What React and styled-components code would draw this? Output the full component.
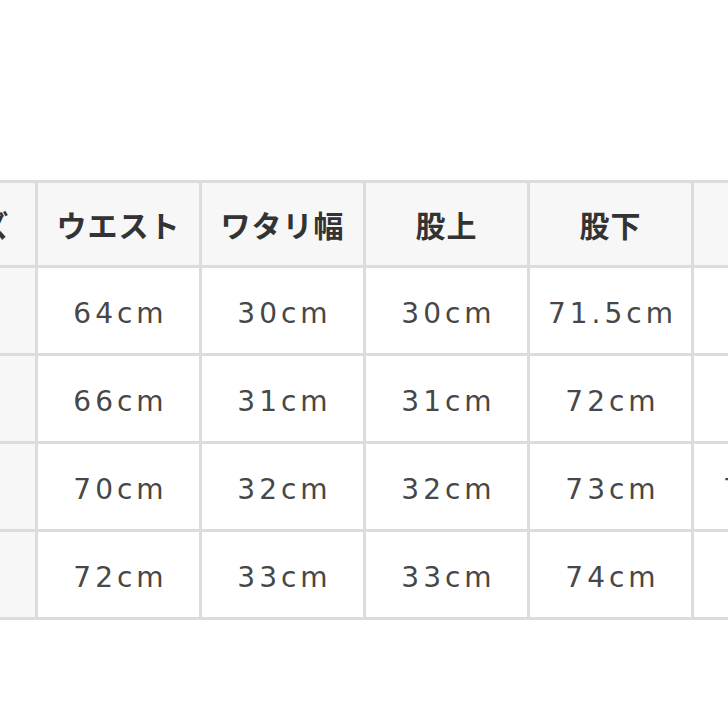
import React from "react";
import styled, { createGlobalStyle } from "styled-components";

const GlobalStyle = createGlobalStyle`
  html, body {
    margin: 0;
    padding: 0;
    background: #ffffff;
    overflow: hidden;
  }
  body {
    width: 728px;
    height: 728px;
  }
`;

const Page = styled.div`
  width: 728px;
  height: 728px;
  overflow: hidden;
  padding-top: 180px;
  box-sizing: border-box;
`;

const SizeTable = styled.table`
  border-collapse: collapse;
  table-layout: fixed;
  width: 987px;
  margin-left: -129px;
`;

const HeadCell = styled.th`
  width: ${(p) => (p.$label ? "143px" : "161px")};
  height: 82px;
  padding: ${(p) => (p.$label ? "0 0 0 18px" : "0")};
  border: 3px solid #dcdcdc;
  background: #f7f7f7;
  color: #333333;
  font-family: "Noto Sans CJK JP", "Noto Sans", sans-serif;
  font-weight: 700;
  font-size: 30px;
  letter-spacing: 1px;
  text-align: center;
  white-space: nowrap;
`;

const Cell = styled.td`
  height: 80px;
  padding: 5px 0 0 4px;
  border: 3px solid #dcdcdc;
  background: ${(p) => (p.$label ? "#f7f7f7" : "#ffffff")};
  color: #474747;
  font-family: "DejaVu Sans", "Liberation Sans", sans-serif;
  font-size: 28px;
  letter-spacing: 4px;
  text-align: center;
  white-space: nowrap;
`;

const headers = ["サイズ", "ウエスト", "ワタリ幅", "股上", "股下", "裾幅"];

const rows = [
  ["S", "64cm", "30cm", "30cm", "71.5cm", "20cm"],
  ["M", "66cm", "31cm", "31cm", "72cm", "21cm"],
  ["L", "70cm", "32cm", "32cm", "73cm", "7.5cm"],
  ["XL", "72cm", "33cm", "33cm", "74cm", "23cm"],
];

export default function App() {
  return (
    <Page>
      <GlobalStyle />
      <SizeTable>
        <thead>
          <tr>
            {headers.map((h, i) => (
              <HeadCell key={h} $label={i === 0}>
                {h}
              </HeadCell>
            ))}
          </tr>
        </thead>
        <tbody>
          {rows.map((r) => (
            <tr key={r[0]}>
              {r.map((v, i) => (
                <Cell key={i} $label={i === 0}>
                  {v}
                </Cell>
              ))}
            </tr>
          ))}
        </tbody>
      </SizeTable>
    </Page>
  );
}
